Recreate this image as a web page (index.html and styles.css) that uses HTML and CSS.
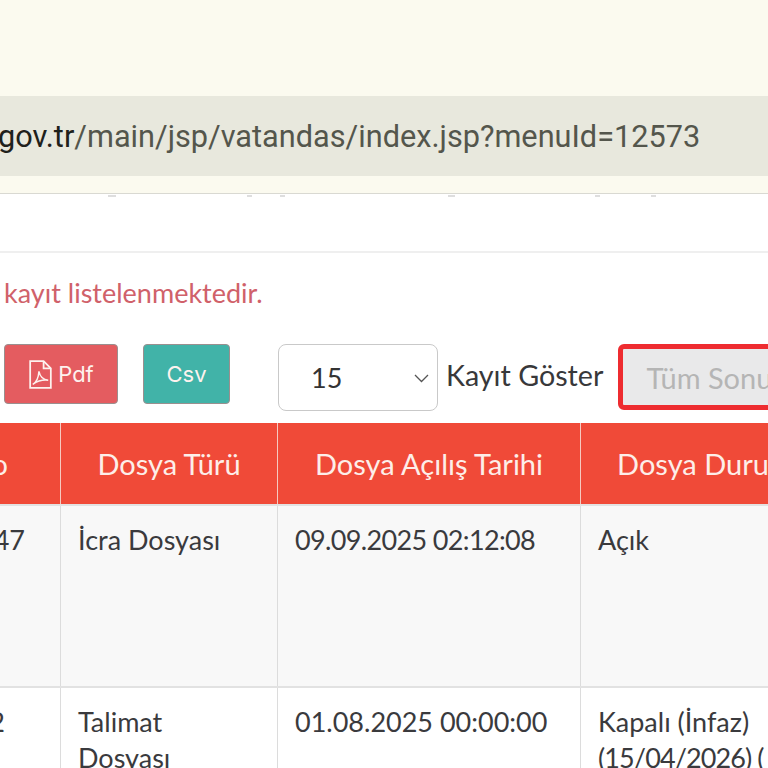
FILE: index.html
```html
<!DOCTYPE html>
<html lang="en">
<head>
  <meta charset="UTF-8" />
  <title>Dosya Listesi</title>
  <link rel="stylesheet" href="styles.css" />
</head>
<body>

<header class="browser-bar">
  <div class="address-bar">
    <span class="url"><span class="url-host">gov.tr</span>/main/jsp/vatandas/index.jsp?menuId=12573</span>
  </div>
</header>

<main class="content">
  <div class="result-note">kayıt listelenmektedir.</div>

  <div class="toolbar">
    <button class="btn btn-pdf">
      <svg class="pdf-icon" viewBox="0 0 24 30" width="25" height="31" fill="none" stroke="currentColor" stroke-width="1.7">
        <path d="M2 2h13l7 7v19H2z" />
        <path d="M15 2v7h7" />
        <path d="M4.500 24.500c3-1.500 5.500-6 6-12.500 1 5 4 8 9 8.500-4-.5-10 .5-15 4z" stroke-width="1.400" />
      </svg>
      Pdf
    </button>
    <button class="btn btn-csv">Csv</button>
    <div class="page-select">
      <span>15</span>
      <svg class="chevron" viewBox="0 0 16 10" width="17" height="10" fill="none" stroke="#555" stroke-width="1.300"><path d="M1.500 2l6.500 6.500 6.500-6.500" /></svg>
    </div>
    <span class="page-label">Kayıt Göster</span>
    <button class="btn-all">Tüm Sonuçları Göster</button>
  </div>

  <table class="file-table">
    <colgroup>
      <col class="col-no" />
      <col class="col-type" />
      <col class="col-date" />
      <col class="col-status" />
    </colgroup>
    <thead>
      <tr>
        <th class="cell-no">Dosya No</th>
        <th>Dosya Türü</th>
        <th>Dosya Açılış Tarihi</th>
        <th class="cell-status">Dosya Durumu</th>
      </tr>
    </thead>
    <tbody>
      <tr class="row-odd">
        <td class="cell-no">47</td>
        <td>İcra Dosyası</td>
        <td class="date-tight">09.09.2025 02:12:08</td>
        <td>Açık</td>
      </tr>
      <tr>
        <td class="cell-no cell-no-short">2</td>
        <td>Talimat Dosyası</td>
        <td>01.08.2025 00:00:00</td>
        <td class="cell-status">Kapalı (İnfaz)<br /><span class="date-closed">(15/04/2026) (</span></td>
      </tr>
    </tbody>
  </table>
</main>

</body>
</html>
```
FILE: styles.css
```css
* {
  margin: 0;
  padding: 0;
  box-sizing: border-box;
}

html,
body {
  height: 768px;
  overflow: hidden;
  background: #ffffff;
}

body {
  width: 768px;
  font-family: Lato, "Noto Sans", sans-serif;
  color: #3a3a3d;
}

/* Browser bar */
.browser-bar {
  height: 194px;
  padding-top: 96px;
  background: #fbfaef;
  border-bottom: 1px solid #d9d9d2;
}

.address-bar {
  height: 80px;
  display: flex;
  align-items: center;
  overflow: hidden;
  background: #e8e8dd;
}

.url {
  margin-left: -2px;
  font-family: Roboto, sans-serif;
  font-size: 30.700px;
  white-space: nowrap;
  color: #54564c;
}

.url-host {
  color: #1f211b;
}

/* Page content */
.content {
  width: 768px;
}

/* the small grey marks at the top are what shows of a line hidden behind the bar */
.result-note {
  height: 150px;
  padding-top: 82px;
  padding-left: 4px;
  font-size: 27px;
  color: #d0616a;
  background:
    linear-gradient(#dedede, #dedede) 108px 1px / 8px 2px no-repeat,
    linear-gradient(#dedede, #dedede) 247px 1px / 5px 2px no-repeat,
    linear-gradient(#dedede, #dedede) 280px 1px / 5px 2px no-repeat,
    linear-gradient(#dedede, #dedede) 448px 1px / 7px 2px no-repeat,
    linear-gradient(#dedede, #dedede) 595px 1px / 5px 2px no-repeat,
    linear-gradient(#dedede, #dedede) 651px 1px / 5px 2px no-repeat,
    linear-gradient(#ffffff 57px, #efefef 57px, #efefef 59px, #ffffff 59px);
}

.toolbar {
  height: 79px;
  display: flex;
  align-items: flex-start;
  padding-left: 4px;
  overflow: hidden;
  white-space: nowrap;
}

.btn {
  flex: none;
  height: 60px;
  display: flex;
  align-items: center;
  justify-content: center;
  font-family: Inter, sans-serif;
  font-size: 22px;
  color: #fdf2ee;
  border: 1px solid #9a8f8f;
  border-radius: 4px;
}

.btn-pdf {
  width: 114px;
  gap: 5px;
  background: #e45c60;
}

.btn-csv {
  width: 87px;
  margin-left: 25px;
  background: #41b3a8;
}

.page-select {
  flex: none;
  width: 160px;
  height: 67px;
  margin-left: 48px;
  padding: 0 7px 0 32px;
  display: flex;
  align-items: center;
  justify-content: space-between;
  font-size: 27px;
  color: #333333;
  border: 1px solid #c9c9c9;
  border-radius: 8px;
}

.page-label {
  flex: none;
  margin-left: 8px;
  line-height: 63px;
  font-size: 28.700px;
  color: #38383a;
}

.btn-all {
  flex: none;
  width: 320px;
  height: 66px;
  margin-left: 15px;
  padding-left: 23px;
  text-align: left;
  font-family: inherit;
  font-size: 29px;
  color: #b5b5b5;
  background: #e9e9ea;
  border: 5px solid #ee2c30;
  border-radius: 6px;
}

/* Table */
.file-table {
  width: 1005px;
  margin-left: -160px;
  table-layout: fixed;
  border-collapse: collapse;
  font-size: 27px;
}

.col-no { width: 220px; }
.col-type { width: 217px; }
.col-date { width: 303px; }
.col-status { width: 265px; }

.file-table th {
  height: 82px;
  font-size: 29px;
  font-weight: 400;
  white-space: nowrap;
  color: #fdeee9;
  background: #f04a38;
  border-left: 1px solid #f6c9c0;
  border-right: 1px solid #f6c9c0;
}

.file-table th.cell-no {
  text-align: right;
  padding-right: 52px;
}

.file-table td {
  height: 182px;
  padding: 16px 17px;
  vertical-align: top;
  line-height: 36px;
  border: 1px solid #dcdcdc;
  border-top: 2px solid #e2e2e2;
}

.file-table td.cell-no {
  text-align: right;
  padding-right: 35px;
}

.file-table td.cell-no-short {
  padding-right: 55px;
}

.file-table td.cell-status {
  white-space: nowrap;
}

.file-table td.date-tight {
  letter-spacing: -0.65px;
}

.date-closed {
  letter-spacing: -0.9px;
}

.row-odd {
  background: #f8f8f8;
}
```
